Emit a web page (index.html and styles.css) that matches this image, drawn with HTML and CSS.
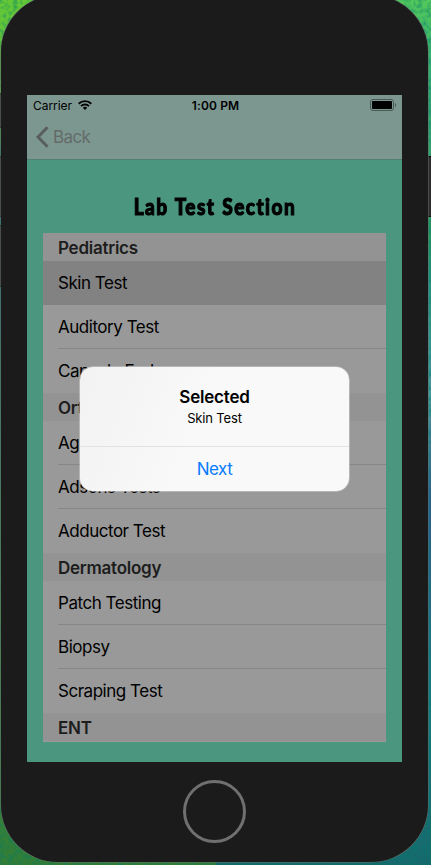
FILE: index.html
```html
<!DOCTYPE html>
<html lang="en">
<head>
<meta charset="utf-8">
<meta name="viewport" content="width=device-width, initial-scale=1">
<title>Lab Test Section</title>
<link rel="stylesheet" href="styles.css">
</head>
<body>
<div class="desktop">
  <svg class="texture" width="431" height="865" aria-hidden="true">
    <filter id="grain" x="0" y="0" width="100%" height="100%">
      <feTurbulence type="fractalNoise" baseFrequency="0.22" numOctaves="3" seed="4"/>
      <feColorMatrix values="0 0 0 0 0  0 0 0 0 0.2  0 0 0 0 0.15  1.8 0 0 0 -0.7"/>
    </filter>
    <rect width="431" height="865" filter="url(#grain)"/>
  </svg>
  <i class="side mute"></i><i class="side up"></i><i class="side down"></i><i class="side power"></i>
  <div class="phone">
    <main class="screen">
      <header class="bar">
        <div class="status">
          <span class="carrier">Carrier
            <svg class="wifi" width="14" height="10" viewBox="0 0 14 10" fill="none" stroke="#000" stroke-width="1.9">
              <path d="M.7 3.7a9 9 0 0 1 12.6 0M3 6.1a5.7 5.7 0 0 1 8 0"/>
              <path d="M4.8 7.8a3.1 3.1 0 0 1 4.4 0L7 10z" fill="#000" stroke="none"/>
            </svg>
          </span>
          <span class="time">1:00 PM</span>
          <svg class="battery" width="27" height="12" viewBox="0 0 27 12">
            <rect x=".5" y=".5" width="23" height="11" rx="2.5" fill="none" stroke="#4b5956"/>
            <rect x="2" y="2" width="20" height="8" rx="1" fill="#000"/>
            <path d="M25 4a2.3 2.3 0 0 1 0 4z" fill="#4b5956"/>
          </svg>
        </div>
        <div class="nav">
          <svg width="13" height="22" viewBox="0 0 13 22" fill="none" stroke="#595e5d" stroke-width="3"><path d="M11.5 1.2 2 11l9.5 9.8"/></svg>
          <span class="back">Back</span>
        </div>
      </header>
      <h1 class="title"><span>Lab Test Section</span></h1>
      <section class="table">
        <h2>Pediatrics</h2>
        <ul><li class="selected">Skin Test</li><li>Auditory Test</li><li>Capsule Endoscopy</li></ul>
        <h2>Orthopedics</h2>
        <ul><li>Aging Test</li><li>Adsons Tests</li><li>Adductor Test</li></ul>
        <h2>Dermatology</h2>
        <ul><li>Patch Testing</li><li>Biopsy</li><li>Scraping Test</li></ul>
        <h2 class="last">ENT</h2>
      </section>
      <div class="alert" role="dialog">
        <div class="message"><strong>Selected</strong><span>Skin Test</span></div>
        <div class="action">Next</div>
      </div>
    </main>
    <div class="home"></div>
  </div>
</div>
</body>
</html>
```
FILE: styles.css
```css
* { box-sizing: border-box; }
body { margin: 0; font-family: Inter, "Liberation Sans", sans-serif; color: #000; }
.desktop {
  position: relative; width: 431px; height: 865px; overflow: hidden;
  background:
    linear-gradient(#55c95b, #35b070 60px, #36a06f 150px, #279660 235px, #2a9388 290px, #4a9a9c 400px, #2a5f90 500px, #187b80 700px, #18686c 865px) 100% 0 / 50% 100% no-repeat,
    linear-gradient(#65c936, #5fbb3c 95px, #4e9a40 135px, #237c70 155px, #257675 290px, #3b8b46 600px, #347d35 865px);
}
.texture { position: absolute; inset: 0; opacity: .65; }
.side { position: absolute; background: #2d2d2d; border: 1px solid #080808; }
.mute { left: -2px; top: 93px; width: 5px; height: 35px; }
.up { left: -2px; top: 156px; width: 5px; height: 61px; }
.down { left: -2px; top: 225px; width: 5px; height: 62px; }
.power { left: 426px; top: 156px; width: 7px; height: 61px; }
.phone {
  position: relative; width: 427px; height: 867px; margin: -5px 0 0 1px; padding: 100px 26px 0;
  background: #1b1b1b; border-radius: 57px; box-shadow: 0 0 0 .5px #657069;
}
.screen { position: relative; width: 375px; height: 667px; background: #4a967f; }
.bar { height: 65px; background: #7c9790; border-bottom: 1px solid #4e8172; }
.status { display: grid; grid-template-columns: 1fr auto 1fr; align-items: center; height: 20px; padding: 0 5px 0 6px; font-size: 12px; }
.carrier { display: flex; align-items: center; gap: 6px; letter-spacing: -.05px; }
.time { font-weight: 600; letter-spacing: .15px; margin-left: 1px; }
.battery { justify-self: end; }
.nav { display: flex; align-items: center; gap: 4px; height: 44px; padding-left: 9px; color: #646b69; }
.nav svg { flex: none; }
.back { font-size: 17px; line-height: 20px; letter-spacing: -.6px; padding-bottom: 1px; }
.title { display: flex; justify-content: center; align-items: center; height: 73px; margin: 0; padding-top: 18px; font: 900 23px/30px Lato, sans-serif; letter-spacing: 1.7px; word-spacing: 1px; white-space: nowrap; }
.title span { transform: scaleX(.83); -webkit-text-stroke: 1.1px #000; }
.table { width: 343px; height: 509px; margin: 0 16px; background: #999; overflow: hidden; }
.table h2 { height: 28px; margin: 0; padding-left: 15px; background: #939393; color: #1d1d1d; font-size: 17px; line-height: 30px; font-weight: 600; letter-spacing: -.25px; }
.table ul { list-style: none; margin: 0; padding: 0; }
.table li { height: 44px; padding-left: 15px; font-size: 17px; line-height: 44px; letter-spacing: -.47px; background: linear-gradient(#878787, #878787) 15px 100% / 100% 1px no-repeat; }
.table li:last-child { background: none; }
.table .selected { background: #828282; }
.alert {
  position: absolute; left: 53px; top: 272px; width: 269px; height: 124px; overflow: hidden;
  border-radius: 13px; background: linear-gradient(110deg, #f2f2f2, #f9f9f9 45%); text-align: center; box-shadow: 0 0 0 .5px #d4d4d4;
}
.message { display: flex; flex-direction: column; height: 80px; padding-top: 19px; border-bottom: 1px solid #e2e2e2; }
.message strong { font-size: 17px; line-height: 22px; font-weight: 600; letter-spacing: -.2px; }
.message span { font-size: 13px; line-height: 20px; letter-spacing: -.15px; }
.action { color: #087cff; font-size: 17px; line-height: 44px; letter-spacing: -.45px; }
.home { width: 63px; height: 63px; margin: 18px auto 0; border: 3px solid #707070; border-radius: 50%; }
```
